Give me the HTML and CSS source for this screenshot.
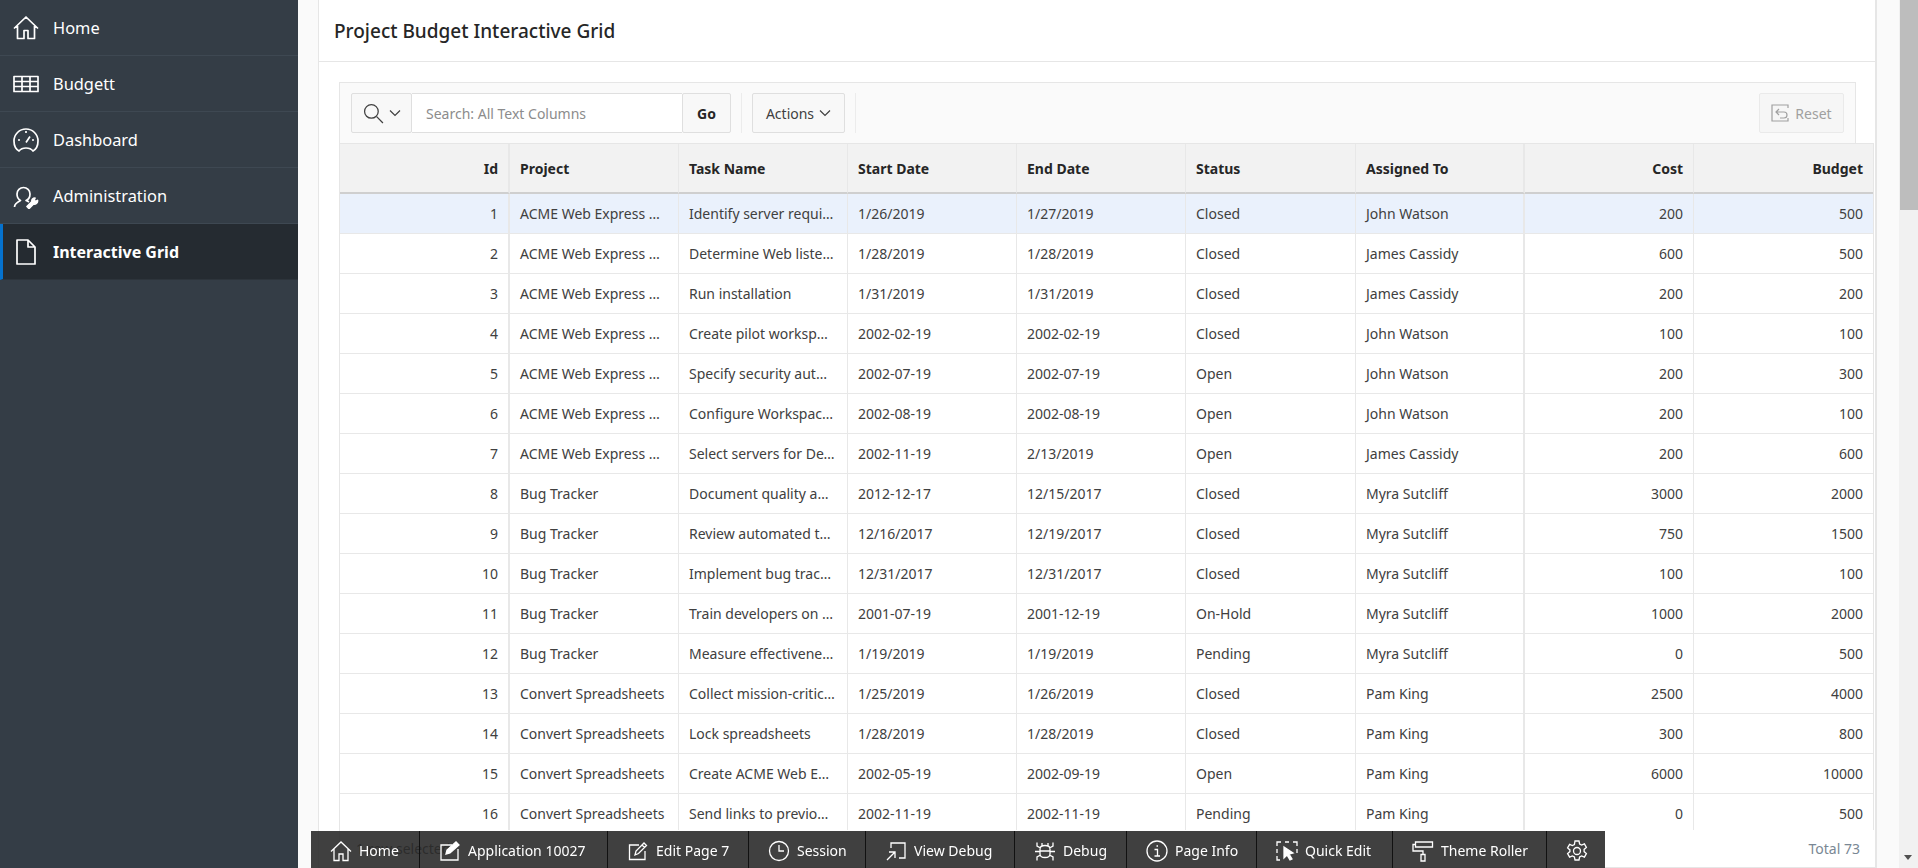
FILE: index.html
```html
<!DOCTYPE html>
<html lang="en">
<head>
    <meta charset="UTF-8">
    <title>Project Budget Interactive Grid</title>
    <link rel="stylesheet" href="styles.css">
</head>
<body>
    <nav class="side-nav">
        <a class="nav-item">
            <svg class="nav-icon" viewBox="0 0 26 26"><path d="M1 13.500 13 2l12 11.500M4.500 11v12.500h6.500v-8h4v8h6.500V11"/></svg>
            <span>Home</span>
        </a>
        <a class="nav-item">
            <svg class="nav-icon" viewBox="0 0 26 26"><path d="M1 5.500h24v15H1zM1 10.500h24M1 15.500h24M9 5.500v15M17 5.500v15"/></svg>
            <span>Budgett</span>
        </a>
        <a class="nav-item">
            <svg class="nav-icon" viewBox="0 0 26 26"><path d="M6 24C2.500 22 1 18 1 14a12 12 0 0 1 24 0c0 4-1.500 8-5 10-1.500-2-4-3-7-3s-5.500 1-7 3zM13 15.500l4-6M13 4v2M5 13h2M19 13h2"/></svg>
            <span>Dashboard</span>
        </a>
        <a class="nav-item">
            <svg class="nav-icon" viewBox="0 0 26 26"><path d="M1.500 24c0-3 3-5 6-6.500-2-1-3.500-3.500-3.500-6.500a6.500 6.500 0 0 1 13 0c0 3-1.500 5.500-4 6.500 1 .4 2 .8 3 1.500"/><path class="solid" d="m14 23.500 5-5c-.5-2 1-3.500 3-3.500l-1 2 1.500 1.500 2-1c.3 2.500-2 4-4 3.500l-4.500 4.500z"/></svg>
            <span>Administration</span>
        </a>
        <a class="nav-item nav-item-active">
            <svg class="nav-icon" viewBox="0 0 26 26"><path d="M4 1h11l7 7v17H4zM15 1v7h7"/></svg>
            <span>Interactive Grid</span>
        </a>
    </nav>

    <main class="page-body">
        <section class="region">
            <h2 class="region-title">Project Budget Interactive Grid</h2>
            <div class="region-body">
                <div class="ig-toolbar">
                    <div class="search-group">
                        <button class="search-column">
                            <svg class="tool-icon search-icon" viewBox="0 0 20 20"><circle cx="8" cy="8" r="6.500"/><path d="m13 13 6 6"/></svg>
                            <svg class="chevron" viewBox="0 0 12 8"><path d="m1 1.500 5 5 5-5"/></svg>
                        </button>
                        <div class="search-input">Search: All Text Columns</div>
                        <button class="go-button">Go</button>
                    </div>
                    <span class="tool-sep"></span>
                    <button class="actions-button">Actions
                        <svg class="chevron" viewBox="0 0 12 8"><path d="m1 1.500 5 5 5-5"/></svg>
                    </button>
                    <span class="tool-sep"></span>
                    <button class="reset-button">
                        <svg class="tool-icon" viewBox="0 0 18 18"><path d="M17 4V1H1v16h16v-3M8 5 5 8l3 3M5 8h8a3 3 0 0 1 3 3c0 2-1 3-3 3H9"/></svg>
                        Reset
                    </button>
                </div>
                <div id="grid" class="ig-grid"></div>
            </div>
            <div class="region-foot">
                <span class="selected-count">1 row selected</span>
                <span class="total-count">Total 73</span>
            </div>
        </section>
    </main>

    <div class="scroll-bar">
        <span class="scroll-thumb"></span>
        <span class="scroll-space"></span>
        <span class="scroll-arrow"></span>
    </div>

    <div class="dev-bar">
        <a class="dev-item dev-home">
            <svg class="dev-icon" viewBox="0 0 22 22"><path d="M1 11.500 11 2l10 9.500M4 9v11.500h5V14h4v6.500h5V9"/></svg>Home
        </a>
        <a class="dev-item dev-app">
            <svg class="dev-icon" viewBox="0 0 22 22"><path d="M19 9v11H2V5h11"/><path class="solid" d="m7 14 1-4 9-8 3 3-9 8z"/></svg>Application 10027
        </a>
        <a class="dev-item dev-edit">
            <svg class="dev-icon" viewBox="0 0 22 22"><path d="M18 11v8.500H2.500V5H12M8 15l1-4 8-8 2.500 2.500-8 8zM15 5l2.500 2.500"/></svg>Edit Page 7
        </a>
        <a class="dev-item dev-session">
            <svg class="dev-icon" viewBox="0 0 22 22"><circle cx="11" cy="11" r="9.500"/><path d="M11 5v6h5"/></svg>Session
        </a>
        <a class="dev-item dev-view">
            <svg class="dev-icon" viewBox="0 0 22 22"><path d="M6 8V3h14v15h-6M2 20l8-8M4 12h6v6"/></svg>View Debug
        </a>
        <a class="dev-item dev-debug">
            <svg class="dev-icon" viewBox="0 0 22 22"><path d="M6 9c0-2 2-3.500 5-3.500s5 1.500 5 3.500v5c0 2-2 3.500-5 3.500S6 16 6 14zM6 11h10M1 11.500h5M16 11.500h5M6.500 8 3 6V2.500M15.500 8 19 6V2.500M6.500 15 3 17v3.500M15.500 15l3.500 2v3.500M8 5.500V3M14 5.500V3"/></svg>Debug
        </a>
        <a class="dev-item dev-info">
            <svg class="dev-icon" viewBox="0 0 22 22"><circle cx="11" cy="11" r="10"/><path d="M8.500 9.500h3V16M8.500 16h5.500M10.500 6h1.500"/></svg>Page Info
        </a>
        <a class="dev-item dev-quick">
            <svg class="dev-icon" viewBox="0 0 22 22"><path d="M1 6V2h4M9 2h4M17 2h4v4M1 9v4M1 16v4h3M21 9v4"/><path class="solid" d="m8 7 9 6-4 1 3 5-2 1-3-5-3 3z"/></svg>Quick Edit
        </a>
        <a class="dev-item dev-theme">
            <svg class="dev-icon" viewBox="0 0 22 22"><path d="M3.500 2h17v5h-17zM3.500 4.500H1V11h10v3.500M9 14.500h4V21H9z"/></svg>Theme Roller
        </a>
        <a class="dev-item dev-gear">
            <svg class="dev-icon" viewBox="0 0 22 22"><circle cx="11" cy="11" r="3.500"/><path d="M9 1h4l.6 3 2 1 2.800-1.100 2 3.500-2.300 2v2.200l2.300 2-2 3.500-2.800-1.100-2 1-.6 3H9l-.6-3-2-1-2.800 1.100-2-3.500 2.300-2V9.900l-2.300-2 2-3.500 2.800 1.100 2-1z"/></svg>
        </a>
    </div>

    <script src="grid.js"></script>
</body>
</html>
```

FILE: styles.css
```css
* {
    box-sizing: border-box;
}
html, body {
    height: 100%;
    margin: 0;
    overflow: hidden;
}
body {
    font-family: "Noto Sans", "Open Sans", sans-serif;
    font-size: 14px;
    color: #404040;
    background-color: #fafafa;
    display: flex;
}
button {
    font: inherit;
    color: inherit;
}

/* side navigation */
.side-nav {
    flex: 0 0 298px;
    height: 868px;
    background: #343d46;
}
.nav-item {
    display: flex;
    align-items: center;
    height: 56px;
    padding: 1px 0 0 13px;
    color: #fff;
    font-size: 16.400px;
    border-bottom: 1px solid #3e4852;
}
.nav-item:first-child {
    height: 55.500px;
}
.nav-item span {
    margin-left: 14px;
}
.nav-item-active {
    padding-left: 10px;
    font-weight: 700;
    font-size: 16px;
    background: #252b31;
    border-left: 3px solid #0572ce;
    border-bottom: 1px solid #2d343b;
}
.nav-icon {
    width: 26px;
    height: 26px;
    fill: none;
    stroke: #fff;
    stroke-width: 1.700;
    stroke-linejoin: round;
}
.nav-icon .solid {
    fill: #fff;
}

/* page and region */
.page-body {
    flex: 0 0 1601px;
    height: 868px;
    padding: 0 22px 0 20px;
    overflow: hidden;
}
.region {
    height: 868px;
    background: #fff;
    border: 1px solid #e6e6e6;
    border-top: 0;
    border-right-width: 2px;
    position: relative;
}
.region-title {
    height: 62px;
    margin: 0;
    padding: 0 15px;
    line-height: 62px;
    font-size: 19px;
    font-weight: 500;
    color: #262626;
    border-bottom: 1px solid #e6e6e6;
}
.region-body {
    padding: 20px 0 0 20px;
}

/* toolbar */
.ig-toolbar {
    display: flex;
    align-items: flex-start;
    width: 1517px;
    height: 61px;
    padding: 10px 11px 0 11px;
    background: #fafafa;
    border: 1px solid #e6e6e6;
    border-bottom: 0;
}
.search-group {
    display: flex;
    height: 40px;
}
.search-group button, .actions-button, .reset-button {
    background: #f8f8f8;
    border: 1px solid #dfdfdf;
    border-radius: 2px;
    padding: 0;
    display: flex;
    align-items: center;
    justify-content: center;
}
.search-column {
    width: 61px;
    gap: 5px;
}
.search-input {
    width: 270px;
    padding-left: 14px;
    line-height: 40px;
    color: #8c8c8c;
    background: #fff;
    border-top: 1px solid #dfdfdf;
    border-bottom: 1px solid #dfdfdf;
}
.go-button {
    width: 49px;
    font-weight: 700;
    color: #262626;
}
.tool-sep {
    width: 1px;
    height: 40px;
    margin: 0 10px;
    background: #ececec;
}
.actions-button {
    width: 93px;
    height: 40px;
    gap: 5px;
}
.reset-button {
    width: 85px;
    height: 40px;
    gap: 6px;
    margin-left: auto;
    color: #a0a0a0;
    background: #f6f6f6;
    border-color: #eaeaea;
}
.tool-icon {
    width: 18px;
    height: 18px;
    fill: none;
    stroke: currentColor;
    stroke-width: 1.200;
}
.search-icon {
    width: 21px;
    height: 21px;
}
.chevron {
    width: 12px;
    height: 8px;
    fill: none;
    stroke: currentColor;
    stroke-width: 1.200;
}

/* grid */
.ig-grid {
    width: 1535px;
    display: grid;
    grid-template-columns: 170px 169px 169px 169px 169px 170px 169px 169px 1fr;
    border: 1px solid #e6e6e6;
    border-bottom: 0;
}
.ig-head, .ig-cell {
    padding: 0 12px 0 10px;
    white-space: nowrap;
    overflow: hidden;
    text-overflow: ellipsis;
    border-right: 1px solid #e8e8e8;
}
.ig-head {
    height: 50px;
    line-height: 49px;
    font-weight: 700;
    color: #262626;
    background: #f2f2f2;
    border-bottom: 2px solid #cfcfcf;
}
.ig-cell {
    height: 40px;
    line-height: 40px;
    border-bottom: 1px solid #e8e8e8;
}
.ig-num {
    padding-right: 10px;
    text-align: right;
}
.ig-frozen {
    border-right-width: 2px;
}
.ig-last {
    border-right: 0;
}
.ig-selected {
    background: #eaf1fc;
}

/* footer of the region, mostly under the developer bar */
.region-foot {
    position: absolute;
    left: 20px;
    right: 0;
    bottom: 0;
    height: 37px;
    line-height: 37px;
    padding: 0 15px 0 16px;
    display: flex;
    justify-content: space-between;
    color: #333;
    background: #fff;
    border-left: 1px solid #e6e6e6;
}
.total-count {
    color: #7a8794;
}

/* scrollbar */
.scroll-bar {
    flex: 0 0 19px;
    height: 868px;
    display: flex;
    flex-direction: column;
    background: #f1f1f1;
}
.scroll-thumb {
    height: 210px;
    margin-left: 1px;
    background: #bdbdbd;
}
.scroll-space {
    flex: 1;
}
.scroll-arrow {
    width: 0;
    height: 0;
    margin: 0 0 8px 5px;
    border-left: 4px solid transparent;
    border-right: 4px solid transparent;
    border-top: 5px solid #505050;
}

/* developer bar */
.dev-bar {
    position: fixed;
    left: 311px;
    bottom: 0;
    height: 37px;
    display: flex;
    color: #fff;
    background: rgba(43, 43, 43, 0.9);
}
.dev-item {
    display: flex;
    align-items: center;
    gap: 7px;
    padding: 2px 0 0 19px;
    font-size: 14px;
    border-right: 1px solid #111;
}
.dev-home { width: 109px; }
.dev-app { width: 188px; }
.dev-edit { width: 141px; }
.dev-session { width: 117px; }
.dev-view { width: 149px; }
.dev-debug { width: 112px; }
.dev-info { width: 130px; }
.dev-quick { width: 136px; }
.dev-theme { width: 154px; }
.dev-gear { width: 58px; border-right: 0; }
.dev-icon {
    flex: none;
    width: 22px;
    height: 22px;
    fill: none;
    stroke: #fff;
    stroke-width: 1.300;
}
.dev-icon .solid {
    fill: #fff;
}
```

FILE: grid.js
```js
const heads = ['Id', 'Project', 'Task Name', 'Start Date', 'End Date', 'Status', 'Assigned To', 'Cost', 'Budget'];
const acme = 'ACME Web Express Configuration';
const bug = 'Bug Tracker';
const conv = 'Convert Spreadsheets';
const rows = [
    [1, acme, 'Identify server requirements', '1/26/2019', '1/27/2019', 'Closed', 'John Watson', 200, 500],
    [2, acme, 'Determine Web listener', '1/28/2019', '1/28/2019', 'Closed', 'James Cassidy', 600, 500],
    [3, acme, 'Run installation', '1/31/2019', '1/31/2019', 'Closed', 'James Cassidy', 200, 200],
    [4, acme, 'Create pilot workspace', '2002-02-19', '2002-02-19', 'Closed', 'John Watson', 100, 100],
    [5, acme, 'Specify security authentication', '2002-07-19', '2002-07-19', 'Open', 'John Watson', 200, 300],
    [6, acme, 'Configure Workspace Settings', '2002-08-19', '2002-08-19', 'Open', 'John Watson', 200, 100],
    [7, acme, 'Select servers for Development', '2002-11-19', '2/13/2019', 'Open', 'James Cassidy', 200, 600],
    [8, bug, 'Document quality assurance', '2012-12-17', '12/15/2017', 'Closed', 'Myra Sutcliff', 3000, 2000],
    [9, bug, 'Review automated testing', '12/16/2017', '12/19/2017', 'Closed', 'Myra Sutcliff', 750, 1500],
    [10, bug, 'Implement bug tracking', '12/31/2017', '12/31/2017', 'Closed', 'Myra Sutcliff', 100, 100],
    [11, bug, 'Train developers on tracker', '2001-07-19', '2001-12-19', 'On-Hold', 'Myra Sutcliff', 1000, 2000],
    [12, bug, 'Measure effectiveness of tool', '1/19/2019', '1/19/2019', 'Pending', 'Myra Sutcliff', 0, 500],
    [13, conv, 'Collect mission-critical sheets', '1/25/2019', '1/26/2019', 'Closed', 'Pam King', 2500, 4000],
    [14, conv, 'Lock spreadsheets', '1/28/2019', '1/28/2019', 'Closed', 'Pam King', 300, 800],
    [15, conv, 'Create ACME Web Express app', '2002-05-19', '2002-09-19', 'Open', 'Pam King', 6000, 10000],
    [16, conv, 'Send links to previous users', '2002-11-19', '2002-11-19', 'Pending', 'Pam King', 0, 500]
];

function cellClass(col) {
    let cls = '';
    if (col === 0 || col === 7 || col === 8) cls += ' ig-num';
    if (col === 0 || col === 6) cls += ' ig-frozen';
    if (col === 8) cls += ' ig-last';
    return cls;
}

let html = '';
heads.forEach(function (text, col) {
    html += `<div class="ig-head${cellClass(col)}">${text}</div>`;
});
rows.forEach(function (row, r) {
    row.forEach(function (text, col) {
        const sel = r === 0 ? ' ig-selected' : '';
        html += `<div class="ig-cell${cellClass(col)}${sel}">${text}</div>`;
    });
});
document.getElementById('grid').innerHTML = html;
```
